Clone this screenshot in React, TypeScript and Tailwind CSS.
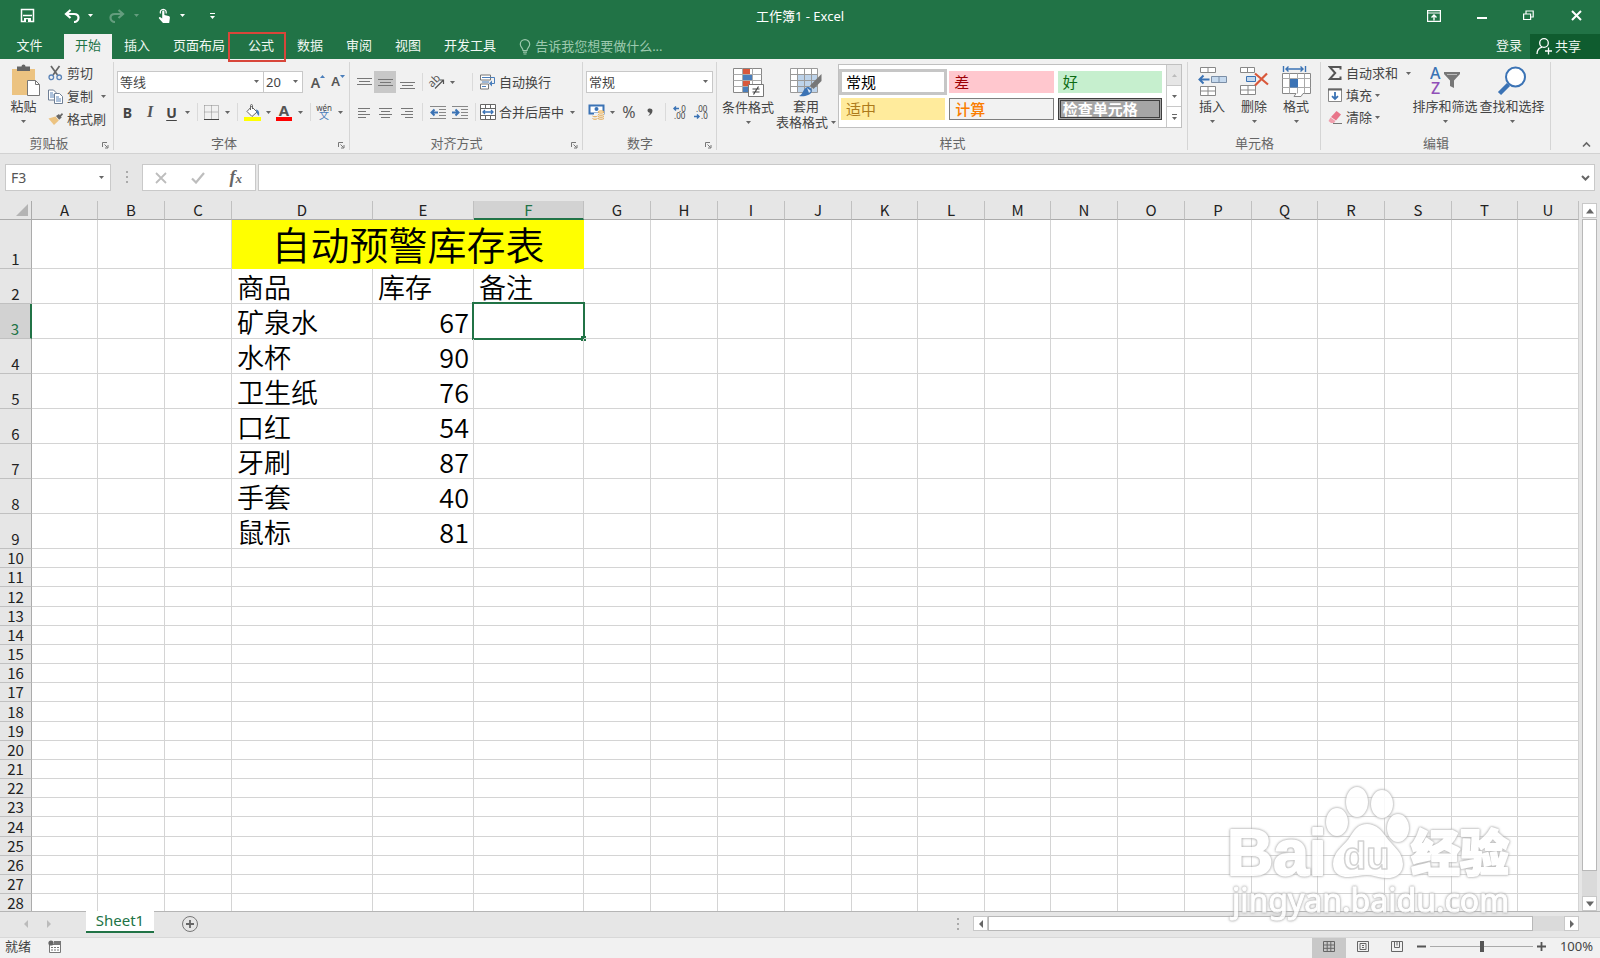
import React from "react";

type Kids = { children?: React.ReactNode };

const Caret = ({ className = "text-[#666]" }: { className?: string }) => (
  <svg width="5" height="3" viewBox="0 0 5 3" className={`shrink-0 ${className}`}>
    <path d="M0 0h5L2.5 3z" fill="currentColor" />
  </svg>
);

const Icon = ({ w = 16, h = 16, children }: Kids & { w?: number; h?: number }) => (
  <svg width={w} height={h} viewBox={`0 0 ${w} ${h}`} fill="none" className="shrink-0">
    {children}
  </svg>
);

const Tool = ({ label, className = "w-5", children }: Kids & { label: string; className?: string }) => (
  <button type="button" aria-label={label} className={`flex h-[22px] shrink-0 items-center justify-center ${className}`}>
    {children}
  </button>
);

const Rule = ({ className = "w-3" }: { className?: string }) => (
  <span className={`flex h-[18px] shrink-0 justify-center ${className}`}>
    <span className="w-px bg-[#dadada]" />
  </span>
);

const Launcher = () => (
  <svg width="7" height="7" viewBox="0 0 7 7" fill="none" stroke="#777">
    <path d="M.5 5V.5H5M2.5 2.5l3 3M6 3v3H3" />
  </svg>
);

function Group({ title, width, titlePad = "", launcher, children }: Kids & { title: string; width: string; titlePad?: string; launcher?: boolean }) {
  return (
    <section aria-label={title} className={`relative flex shrink-0 flex-col ${width}`}>
      <div className="h-[75px]">{children}</div>
      <h2 className={`relative h-[17px] text-center text-[13px] leading-[18px] text-[#666] ${titlePad}`}>
        {title}
        {launcher && (
          <button type="button" aria-label={`${title}设置`} className="absolute right-[5px] top-[8px]">
            <Launcher />
          </button>
        )}
      </h2>
      <span className="absolute right-0 top-[3px] bottom-[3px] w-px bg-[#d5d5d5]" />
    </section>
  );
}

function Combo({ label, value, options, className }: { label: string; value: string; options: string[]; className: string }) {
  return (
    <div className={`relative flex h-[22px] items-center border border-[#c8c8c8] bg-white ${className}`}>
      <select aria-label={label} defaultValue={value} className="h-5 w-full appearance-none bg-transparent pl-[2px] text-[13px] leading-5 text-[#444] outline-none">
        {options.map((o) => (
          <option key={o}>{o}</option>
        ))}
      </select>
      <span className="pointer-events-none absolute right-1 top-2">
        <Caret />
      </span>
    </div>
  );
}

const Row = ({ icon, text, caret, gap = "gap-1" }: { icon: React.ReactNode; text: string; caret?: string; gap?: string }) => (
  <button type="button" className={`flex items-center whitespace-nowrap text-[13px] leading-[22px] ${gap}`}>
    {icon}
    <span>{text}</span>
    {caret && (
      <span className={caret}>
        <Caret />
      </span>
    )}
  </button>
);

function Big({ icon, text, width }: { icon: React.ReactNode; text: string; width: string }) {
  return (
    <button type="button" className={`flex shrink-0 flex-col items-center whitespace-nowrap text-[13px] leading-[18px] ${width}`}>
      <span className="flex h-8 items-center justify-center">{icon}</span>
      {text}
      <span className="mt-[5px]">
        <Caret />
      </span>
    </button>
  );
}

function TitleBar() {
  return (
    <header className="relative flex h-[34px] items-center pb-[3px] text-white">
      <button type="button" aria-label="保存" className="ml-5">
        <Icon w={15} h={15}>
          <path d="M1.5 1.5h12v12h-12z" stroke="#fff" strokeWidth="1.5" />
          <path d="M3 7.5h9" stroke="#fff" strokeWidth="1.5" />
          <path d="M4 10h7v4H4z" fill="#fff" />
          <path d="M6 11.2h2V14H6z" fill="#217346" />
        </Icon>
      </button>
      <button type="button" aria-label="撤消" className="ml-[29px]">
        <Icon w={16} h={14}>
          <path d="M6.5 1L2 5l4.500 4M2.500 5H10c3 0 4.500 1.500 4.500 3.800S12.500 13 10 13" stroke="#fff" strokeWidth="2.200" />
        </Icon>
      </button>
      <span className="ml-2"><Caret className="text-white" /></span>
      <button type="button" aria-label="恢复" className="ml-4 opacity-30">
        <Icon w={16} h={14}>
          <path d="M9.500 1L14 5l-4.500 4M13.500 5H6C3 5 1.500 6.500 1.500 8.800S3.500 13 6 13" stroke="#fff" strokeWidth="2.200" />
        </Icon>
      </button>
      <span className="ml-[9px] opacity-30"><Caret className="text-white" /></span>
      <button type="button" aria-label="触摸/鼠标模式" className="ml-[19px]">
        <Icon w={13} h={16}>
          <path d="M2.500 5.500A3 3 0 1 1 8 5.500" stroke="#fff" strokeWidth="1.200" />
          <path d="M4.200 3.500c0-1.400 2.200-1.400 2.200 0V7l4.200.9c1 .2 1.400.9 1.300 1.800L11.200 15H5L1 10.500c-.6-.9.500-1.900 1.400-1.200l1.800 1.200z" fill="#fff" />
        </Icon>
      </button>
      <span className="ml-[9px]"><Caret className="text-white" /></span>
      <button type="button" aria-label="自定义快速访问工具栏" className="ml-[25px]">
        <Icon w={5} h={6}>
          <path d="M0 .5h5" stroke="#fff" />
          <path d="M0 3h5L2.500 6z" fill="#fff" />
        </Icon>
      </button>
      <h1 className="pointer-events-none absolute inset-x-0 text-center text-[13px] leading-8">工作簿1 - Excel</h1>
      <div className="ml-auto flex items-center pr-[18px]">
        <button type="button" aria-label="功能区显示选项" className="mr-[36px]">
          <Icon w={14} h={12}>
            <path d="M.6.6h12.800v10.800H.6zM1 3h12" stroke="#fff" strokeWidth="1.200" />
            <path d="M7 10.500V5.200M4.500 7.500L7 5l2.500 2.500" stroke="#fff" strokeWidth="1.400" />
          </Icon>
        </button>
        <button type="button" aria-label="最小化" className="mr-9">
          <Icon w={10} h={10}><path d="M0 7h10" stroke="#fff" strokeWidth="2" /></Icon>
        </button>
        <button type="button" aria-label="还原" className="mr-[37px]">
          <Icon w={11} h={11}>
            <path d="M.6 4h7v5.500h-7zM3 3.500V1h7.200v6H8" stroke="#fff" strokeWidth="1.200" />
          </Icon>
        </button>
        <button type="button" aria-label="关闭">
          <Icon w={11} h={11}><path d="M1 1l9 9M10 1l-9 9" stroke="#fff" strokeWidth="2" /></Icon>
        </button>
      </div>
    </header>
  );
}

const TABS = ["插入", "页面布局", "公式", "数据", "审阅", "视图", "开发工具"];

function TabRow() {
  return (
    <nav className="flex h-[25px] text-[13px] leading-[22px] text-[#f0f8f3]">
      <button type="button" className="w-16 pb-[3px] pr-[5px]">文件</button>
      <div className="flex gap-px">
        <button type="button" className="bg-[#f1f1f1] px-[11px] pb-[3px] text-[#217346]">开始</button>
        {TABS.map((t) => (
          <button key={t} type="button" className="relative whitespace-nowrap px-[11px] pb-[3px]">
            {t}
            {t === "公式" && <span className="absolute -left-[9px] -right-px -top-[2px] z-10 h-[30px] border-2 border-[#d8463a]" />}
          </button>
        ))}
      </div>
      <div className="ml-3 flex items-center text-[#9cc9ae]">
        <Icon w={12} h={16}>
          <path d="M4 11.500C4 9 1.300 8.200 1.300 5.300a4.700 4.700 0 0 1 9.400 0C10.700 8.200 8 9 8 11.500zM4 13.200h4M4.500 15h3" stroke="#9cc9ae" strokeWidth="1.200" />
        </Icon>
        <input aria-label="操作说明搜索" placeholder="告诉我您想要做什么..." className="ml-1 w-40 bg-transparent pb-[2px] text-[13px] leading-[22px] outline-none placeholder:text-[#9cc9ae]" />
      </div>
      <div className="ml-auto flex">
        <button type="button" className="px-2 pb-[3px]">登录</button>
        <button type="button" className="flex w-[70px] items-center gap-[3px] bg-[#0f5c2f] pb-[2px] pl-[6px]">
          <Icon w={16} h={18}>
            <circle cx="8" cy="6" r="4.300" stroke="#fff" strokeWidth="1.300" />
            <path d="M1 17c0-4 2-6 5.200-6.800M12.500 10.500v7M9 14h7" stroke="#fff" strokeWidth="1.300" />
          </Icon>
          共享
        </button>
      </div>
    </nav>
  );
}

const Lines = ({ rows, w = 15 }: { rows: [number, number, number][]; w?: number }) => (
  <Icon w={w} h={15}>
    {rows.map(([x1, x2, y]) => (
      <path key={y} d={`M${x1} ${y + 0.5}H${x2}`} stroke="#777" />
    ))}
  </Icon>
);

function Clipboard() {
  return (
    <Group title="剪贴板" width="w-[114px]" titlePad="pr-4" launcher>
      <div className="flex pl-[11px] pt-1">
        <button type="button" className="flex w-[30px] shrink-0 flex-col items-center text-[13px] leading-[18px]">
          <Icon w={30} h={34}>
            <path d="M1 6h23v26H1z" fill="#ecc381" />
            <path d="M6 3.500h4.500a2 2 0 0 1 4 0H19V8H6z" fill="#666" />
            <path d="M16.500 17.500h8l4 4v11h-12z" fill="#fff" stroke="#777" />
            <path d="M24.500 17.500v4h4" stroke="#777" />
          </Icon>
          <span className="-ml-[5px] whitespace-nowrap">粘贴</span>
          <span className="-ml-[5px] mt-[5px]"><Caret /></span>
        </button>
        <div className="-mt-px flex flex-col items-start gap-px pl-[7px]">
          <Row icon={
            <Icon w={15} h={16}>
              <path d="M3 1l6.500 9M11.500 1L5 10" stroke="#666" strokeWidth="1.700" />
              <circle cx="3.300" cy="12.300" r="2.300" stroke="#5b84b8" strokeWidth="1.300" />
              <circle cx="11.200" cy="12.300" r="2.300" stroke="#5b84b8" strokeWidth="1.300" />
            </Icon>
          } text="剪切" />
          <Row icon={
            <Icon w={15} h={15}>
              <path d="M.5 1h5l3 3v7h-8z" fill="#fff" stroke="#6f7f95" />
              <path d="M2 4h3M2 6h4M2 8h4" stroke="#5b84b8" />
              <path d="M6.500 4.500h5l3 3v7h-8z" fill="#fff" stroke="#6f7f95" />
              <path d="M8 8h3M8 10h5M8 12h5" stroke="#5b84b8" />
            </Icon>
          } text="复制" caret="ml-1" />
          <Row icon={
            <Icon w={15} h={14}>
              <path d="M8 4l3-2 .8 1.200L14 1l1 1.500-2 2 .7 1-2.600 2.300z" fill="#666" />
              <path d="M7.500 4.500l3.300 4L6 13 .5 6.500z" fill="#ecc381" />
            </Icon>
          } text="格式刷" />
        </div>
      </div>
    </Group>
  );
}

function FontGroup() {
  return (
    <Group title="字体" width="w-[236px]" titlePad="pr-4" launcher>
      <div className="flex flex-col gap-2 pl-[3px] pt-3">
        <div className="flex">
          <Combo label="字体" value="等线" options={["等线", "宋体", "黑体"]} className="w-[147px]" />
          <Combo label="字号" value="20" options={["11", "20", "28"]} className="-ml-px w-10" />
          <Tool label="增大字号" className="ml-1 w-[22px]">
            <span className="text-[14px] font-semibold text-[#555]">A</span>
            <span className="-mt-3"><Icon w={5} h={3}><path d="M0 3h5L2.500 0z" fill="#4a7ebb" /></Icon></span>
          </Tool>
          <Tool label="减小字号" className="w-[18px]">
            <span className="text-[13px] font-semibold text-[#555]">A</span>
            <span className="-mt-3"><Caret className="text-[#4a7ebb]" /></span>
          </Tool>
        </div>
        <div className="flex items-center">
          <Tool label="加粗" className="w-[21px]"><b className="text-[14px] text-[#444]">B</b></Tool>
          <Tool label="倾斜" className="w-6"><i className="font-['Liberation_Serif',serif] text-[16px] font-bold text-[#555]">I</i></Tool>
          <Tool label="下划线" className="w-[19px]"><b className="text-[14px] text-[#444] underline underline-offset-2">U</b></Tool>
          <Tool label="下划线样式" className="w-3"><Caret /></Tool>
          <Rule className="w-2" />
          <Tool label="边框">
            <Icon w={15} h={15}>
              <path d="M.5 .5h14v13M.5 .5v13M7.500 .5v13M.5 7h14" stroke="#888" strokeDasharray="1 1" />
              <path d="M0 14.500h15" stroke="#444" />
            </Icon>
          </Tool>
          <Tool label="边框样式" className="w-3"><Caret /></Tool>
          <Rule className="w-2" />
          <Tool label="填充颜色" className="w-[22px]">
            <Icon w={17} h={17}>
              <path d="M7.500 2.500L13 8l-5 4.500L3 7.500z" fill="#fff" stroke="#666" />
              <path d="M6.500 6V1.500c0-1.300 2-1.300 2 0V5" stroke="#666" />
              <path d="M12 5.500c3 .5 3.500 3 3 6.500-1.500-1-2.500-3-3-6.500z" fill="#4a7ebb" />
              <path d="M0 13h17v4H0z" fill="#ff0" />
            </Icon>
          </Tool>
          <Tool label="填充颜色列表" className="w-[10px]"><Caret /></Tool>
          <Tool label="字体颜色" className="w-[22px]">
            <span className="flex flex-col items-center">
              <b className="text-[15px] leading-[13px] text-[#555]">A</b>
              <span className="h-1 w-4 bg-[#f00]" />
            </span>
          </Tool>
          <Tool label="字体颜色列表" className="w-[10px]"><Caret /></Tool>
          <Rule className="w-[10px]" />
          <Tool label="拼音指南" className="w-[18px]">
            <span className="flex flex-col items-center text-[8px] leading-[7px] text-[#444]">
              wén<span className="text-[10px] leading-[9px] text-[#4a7ebb]">文</span>
            </span>
          </Tool>
          <Tool label="拼音选项" className="w-[14px]"><Caret /></Tool>
        </div>
      </div>
    </Group>
  );
}

function AlignGroup() {
  return (
    <Group title="对齐方式" width="w-[233px]" titlePad="pr-5" launcher>
      <div className="flex flex-col gap-2 pl-1 pt-3">
        <div className="flex items-center">
          <Tool label="顶端对齐" className="w-5"><Lines rows={[[0, 15, 3], [2, 13, 6], [0, 15, 9]]} /></Tool>
          <Tool label="垂直居中" className="w-[22px] bg-[#c8c8c8]"><Lines rows={[[0, 15, 4], [2, 13, 7], [0, 15, 10]]} /></Tool>
          <Tool label="底端对齐" className="w-[22px]"><Lines rows={[[0, 15, 7], [2, 13, 10], [0, 15, 13]]} /></Tool>
          <Rule className="w-[9px]" />
          <Tool label="方向" className="w-[19px]">
            <Icon w={17} h={16}>
              <text x="1" y="11" fontSize="11" fontFamily="Noto Sans" fill="#555" transform="rotate(-45 6 9)">ab</text>
              <path d="M7 14.500l8-8M11.500 6H15.500v4" stroke="#555" strokeWidth="1.200" />
            </Icon>
          </Tool>
          <Tool label="方向列表" className="w-3"><Caret /></Tool>
          <Rule className="ml-[6px] w-4" />
          <Row icon={
            <Icon w={16} h={16}>
              <path d="M.5 1h10v5h-10zM.5 10h8v5h-8z" fill="#fff" stroke="#777" />
              <path d="M2 3.500h12.500v6H10M2 8h7M2 12.500h4" stroke="#4a7ebb" />
              <path d="M12 6.500L9 9.500l3 3z" fill="#4a7ebb" />
            </Icon>
          } text="自动换行" gap="gap-[3px]" />
        </div>
        <div className="flex items-center">
          <Tool label="左对齐" className="w-5"><Lines rows={[[1, 13, 3], [1, 9, 6], [1, 13, 9], [1, 9, 12]]} /></Tool>
          <Tool label="居中" className="w-[22px]"><Lines rows={[[1, 14, 3], [3, 12, 6], [1, 14, 9], [3, 12, 12]]} /></Tool>
          <Tool label="右对齐" className="w-[22px]"><Lines rows={[[1, 13, 3], [5, 13, 6], [1, 13, 9], [5, 13, 12]]} /></Tool>
          <Rule className="w-[9px]" />
          <Tool label="减少缩进量" className="w-[22px]">
            <Icon w={16} h={15}>
              <path d="M0 1.500h16M9 4.500h7M9 7.500h7M9 10.500h7M0 13.500h16" stroke="#888" />
              <path d="M8 7.500H2M4.500 4.500l-3 3 3 3" stroke="#3b73b5" strokeWidth="2" />
            </Icon>
          </Tool>
          <Tool label="增加缩进量" className="w-[22px]">
            <Icon w={16} h={15}>
              <path d="M0 1.500h16M9 4.500h7M9 7.500h7M9 10.500h7M0 13.500h16" stroke="#888" />
              <path d="M0 7.500h6M3.500 4.500l3 3-3 3" stroke="#3b73b5" strokeWidth="2" />
            </Icon>
          </Tool>
          <Rule className="w-[9px]" />
          <Row icon={
            <Icon w={16} h={16}>
              <path d="M.5.5h15v15H.5zM.5 4.500h15M.5 11.500h15M5.500.5v4M10.500.5v4M5.500 11.500v4M10.500 11.500v4" fill="#fff" stroke="#666" />
              <path d="M3 8h10M5 6L3 8l2 2M11 6l2 2-2 2" stroke="#3b73b5" strokeWidth="1.300" />
            </Icon>
          } text="合并后居中" caret="ml-[3px]" gap="gap-[3px]" />
        </div>
      </div>
    </Group>
  );
}

function NumberGroup() {
  return (
    <Group title="数字" width="w-[134px]" titlePad="pr-5" launcher>
      <div className="flex flex-col gap-2 pl-[3px] pr-1 pt-3">
        <Combo label="数字格式" value="常规" options={["常规", "数值", "货币"]} className="w-full" />
        <div className="flex items-center">
          <Tool label="会计数字格式" className="w-[21px]">
            <Icon w={17} h={16}>
              <path d="M1.500 1.500h14v8h-14z" fill="#fff" stroke="#3b73b5" strokeWidth="2" />
              <circle cx="8.500" cy="5" r="2" fill="#3b73b5" />
              <path d="M6 9h10v7H6z" fill="#f1f1f1" />
              <ellipse cx="13" cy="8" rx="3" ry="1.200" fill="#fbe3b5" stroke="#e3a64a" strokeWidth=".8" />
              <path d="M10 10.500c1 1 5 1 6 0M10 12.500c1 1 5 1 6 0M4.500 12c1 1 4 1 5 0M4.500 14.500c1 1 4 1 5 0M10 14.500c1 1 5 1 6 0" stroke="#e3a64a" />
            </Icon>
          </Tool>
          <Tool label="会计数字格式列表" className="w-[10px]"><Caret /></Tool>
          <Tool label="百分比样式" className="w-6"><span className="text-[16px] text-[#555]">%</span></Tool>
          <Tool label="千位分隔样式" className="w-[18px]">
            <Icon w={6} h={8}><path d="M.5 2.200C.5-.3 5.500-.3 5.500 2.700 5.500 5.500 3.500 7 1 8c1.300-1.200 2-2.300 1.800-3.300C1.500 4.700.5 3.700.5 2.200z" fill="#555" /></Icon>
          </Tool>
          <Rule className="w-3" />
          <Tool label="增加小数位数" className="w-[18px]">
            <Icon w={14} h={15}>
              <path d="M6 3.500H1M3 1.500l-2 2 2 2" stroke="#3b73b5" strokeWidth="1.500" />
              <text x="6" y="7" fontSize="8" fontFamily="Noto Sans" fill="#444">.0</text>
              <text x="1" y="14" fontSize="8" fontFamily="Noto Sans" fill="#444">.00</text>
            </Icon>
          </Tool>
          <Tool label="减少小数位数" className="w-6">
            <Icon w={14} h={15}>
              <text x="2" y="7" fontSize="8" fontFamily="Noto Sans" fill="#444">.00</text>
              <path d="M0 11.500h5M3 9.500l2 2-2 2" stroke="#3b73b5" strokeWidth="1.500" />
              <text x="7" y="14" fontSize="8" fontFamily="Noto Sans" fill="#444">.0</text>
            </Icon>
          </Tool>
        </div>
      </div>
    </Group>
  );
}

const STYLES: [string, string][] = [
  ["常规", "bg-white text-black outline-3 outline-[#c6c6c6] -outline-offset-1"],
  ["差", "bg-[#ffc7ce] text-[#9c0006]"],
  ["好", "bg-[#c6efce] text-[#0d6b12]"],
  ["适中", "bg-[#ffeb9c] text-[#ad7a1a]"],
  ["计算", "border border-[#7f7f7f] bg-[#f2f2f2] text-[#fa7d00] font-medium"],
  ["检查单元格", "border-3 border-double border-[#3f3f3f] bg-[#a5a5a5] text-white font-bold"],
];

function StylesGroup() {
  return (
    <Group title="样式" width="w-[471px]">
      <div className="flex pt-[5px]">
        <div className="flex pl-1 pt-[2px]">
          <Big width="w-[54px]" text="条件格式" icon={
            <Icon w={31} h={30}>
              <path d="M.5 1.500h28v24H.5z" fill="#fff" stroke="#888" />
              <path d="M10 2h7v5h-7z" fill="#d9583b" /><path d="M10 7.500h9.500v5.500H10z" fill="#4a7ebb" />
              <path d="M10 13.500h7v5.500h-7z" fill="#d9583b" /><path d="M10 19.500h5v5.500h-5z" fill="#4a7ebb" />
              <path d="M9.500 1.500v24M19.500 1.500v24M.5 7.500h28M.5 13.500h28M.5 19.500h28" stroke="#aaa" />
              <path d="M15.500 17.500h15v12h-15z" fill="#fff" stroke="#777" />
              <path d="M19.500 22h7M19.500 25h7M25.500 19.500l-5 8" stroke="#444" strokeWidth="1.200" />
            </Icon>
          } />
          <button type="button" className="flex w-[62px] flex-col items-center whitespace-nowrap text-[13px] leading-4">
            <span className="flex h-8 items-center">
              <Icon w={32} h={30}>
                <path d="M.5 1.500h27v24H.5z" fill="#fff" />
                <path d="M7.500 7.500h20v18h-20z" fill="#bdd3ea" />
                <path d="M.5 1.500h27v24H.5zM7.500 1.500v24M14.500 1.500v24M21.500 1.500v24M.5 7.500h27M.5 13.500h27M.5 19.500h27" stroke="#9a9a9a" />
                <path d="M31.500 7v7l-8 8-3.500-3.500z" fill="#777" />
                <path d="M9 29c4-1 4-8 8.500-9 3 0 5 2.500 4 5-1 3-7 5-12.500 4z" fill="#3b73b5" />
                <path d="M17 21l4 3-2 2z" fill="#dbe7f4" />
              </Icon>
            </span>
            <span>套用</span>
            <span className="flex items-center gap-[3px]">表格格式<Caret /></span>
          </button>
        </div>
        <div className="ml-px flex h-16 w-[344px] border border-[#c0c0c0] bg-white">
          <div className="grid flex-1 grid-cols-3 content-start gap-x-1 gap-y-[5px] py-[6px] pl-[2px] pr-1">
            {STYLES.map(([name, look]) => (
              <button key={name} type="button" className={`flex h-[22px] items-center whitespace-nowrap text-[15px] leading-4 ${look}`}>
                <span className={name === "检查单元格" ? "pl-[2px]" : "pl-[5px]"}>{name}</span>
              </button>
            ))}
          </div>
          <div className="flex w-[15px] flex-col divide-y divide-[#c8c8c8] border-l border-[#c8c8c8]">
            <button type="button" aria-label="上一行" className="flex flex-1 items-center justify-center bg-[#e6e6e6]">
              <Icon w={5} h={3}><path d="M0 3h5L2.500 0z" fill="#bbb" /></Icon>
            </button>
            <button type="button" aria-label="下一行" className="flex flex-1 items-center justify-center"><Caret /></button>
            <button type="button" aria-label="其他" className="flex flex-1 items-center justify-center">
              <Icon w={5} h={6}><path d="M0 .5h5" stroke="#666" /><path d="M0 3h5L2.500 6z" fill="#666" /></Icon>
            </button>
          </div>
        </div>
      </div>
    </Group>
  );
}

function CellsGroup() {
  return (
    <Group title="单元格" width="w-[133px]">
      <div className="flex pl-[3px] pt-[6px]">
        <Big width="w-[42px]" text="插入" icon={
          <Icon w={30} h={31}>
            <path d="M3.500 1.500h15v5h-15zM11 1.500v5M3.500 20.500h15v9h-15zM11 20.500v9M3.500 25h15" fill="#fff" stroke="#888" />
            <path d="M14.500 10.500h15v6h-15zM22 10.500v6" fill="#c5d9ee" stroke="#7b8ea6" />
            <path d="M12.500 13.500H2.500M6.500 9.500l-4 4 4 4" stroke="#3b73b5" strokeWidth="2" />
          </Icon>
        } />
        <Big width="w-[42px]" text="删除" icon={
          <Icon w={30} h={31}>
            <path d="M1.500 1.500h14v5h-14zM8.500 1.500v5M1.500 19.500h15v9h-15zM9 19.500v9M1.500 24h15" fill="#fff" stroke="#888" />
            <path d="M7.500 10.500h9v5h-9z" fill="#c5d9ee" stroke="#3b73b5" />
            <path d="M16 7.500l13 11M28 7.500L16 19.500" stroke="#d9583b" strokeWidth="2.200" />
          </Icon>
        } />
        <Big width="w-[42px]" text="格式" icon={
          <Icon w={29} h={32}>
            <path d="M1.500 1v6M23.500 1v6M3.500 4h18M6.500 1.500L4 4l2.500 2.500M18.500 1.500L21 4l-2.500 2.500" stroke="#3b73b5" strokeWidth="1.400" />
            <path d="M.5 8.500h28v20H21l-2 3h-7l2-3H.5z" fill="#fff" stroke="#888" />
            <path d="M7.500 8.500v20M15.500 8.500v20M22.500 8.500v20M.5 13.500h28M.5 22.500h28" stroke="#aaa" />
            <path d="M8 14h8v8.500H8z" fill="#3b73b5" />
          </Icon>
        } />
      </div>
    </Group>
  );
}

function EditGroup() {
  return (
    <Group title="编辑" width="w-[230px]">
      <div className="flex pl-[7px] pt-[3px]">
        <div className="flex w-[84px] flex-col items-start">
          <Row icon={<Icon w={14} h={14}><path d="M12.500 3.500V1H1.800l5.400 6-5.400 6h10.700v-2.500" stroke="#555" strokeWidth="2" /></Icon>} text="自动求和" caret="ml-1" />
          <Row icon={
            <Icon w={14} h={14}>
              <path d="M.5 1h13v12.500H.5z" fill="#fff" stroke="#888" /><path d="M0 1.500h14" stroke="#666" strokeWidth="2" />
              <path d="M7 4v7M4 8.200L7 11l3-2.800" stroke="#3b73b5" strokeWidth="1.800" />
            </Icon>
          } text="填充" caret="-ml-px" />
          <Row icon={
            <Icon w={14} h={14}>
              <path d="M8.500 1l4.500 3.500-5 6L3 7z" fill="#e8758a" /><path d="M2.500 7.500l5 3.500-1.500 2H3L.5 11z" fill="#f0a0ae" />
              <path d="M5 13.500h9" stroke="#777" />
            </Icon>
          } text="清除" caret="-ml-px" />
        </div>
        <div className="flex gap-px pt-[3px]">
          <Big width="w-[66px]" text="排序和筛选" icon={
            <Icon w={30} h={30}>
              <text x="0" y="13" fontSize="16" fontWeight="500" fontFamily="Noto Sans" fill="#3b73b5">A</text>
              <text x="1" y="28" fontSize="16" fontWeight="500" fontFamily="Noto Sans" fill="#9050b8">Z</text>
              <path d="M14 6h16v2l-6 6.500V22l-4-2v-5.500L14 8z" fill="#777" />
              <path d="M17 8.500h10" stroke="#bbb" />
            </Icon>
          } />
          <Big width="w-[66px]" text="查找和选择" icon={
            <Icon w={30} h={30}>
              <circle cx="18.500" cy="11" r="9.500" fill="#fff" stroke="#3b73b5" strokeWidth="2" />
              <path d="M11.500 18.500L2.500 27.500" stroke="#3b73b5" strokeWidth="4.500" />
            </Icon>
          } />
        </div>
      </div>
    </Group>
  );
}

function FormulaBar() {
  return (
    <div className="flex h-[47px] shrink-0 items-start bg-[#e6e6e6] px-[5px] pt-[10px]">
      <div className="relative flex h-[27px] w-[106px] shrink-0 items-center border border-[#c9c9c9] bg-white">
        <input aria-label="名称框" defaultValue="F3" className="w-full bg-transparent pl-[5px] text-[14px] text-[#555] outline-none" />
        <span className="absolute right-[6px]"><Caret /></span>
      </div>
      <span className="flex h-[27px] w-[31px] shrink-0 items-center justify-center">
        <Icon w={2} h={13}><path d="M1 0v13" stroke="#aaa" strokeWidth="2" strokeDasharray="2 3" /></Icon>
      </span>
      <div className="flex h-[27px] w-[114px] shrink-0 items-center justify-between border border-[#c9c9c9] bg-white pl-3 pr-[13px]">
        <button type="button" aria-label="取消"><Icon w={12} h={12}><path d="M1 1l10 10M11 1L1 11" stroke="#bdbdbd" strokeWidth="1.800" /></Icon></button>
        <button type="button" aria-label="输入"><Icon w={14} h={12}><path d="M1 6.500L5 10.500 13 1" stroke="#bdbdbd" strokeWidth="2.200" /></Icon></button>
        <button type="button" aria-label="插入函数" className="font-['Liberation_Serif',serif] text-[18px] font-bold italic leading-5 text-[#666]">
          f<span className="text-[13px]">x</span>
        </button>
      </div>
      <div className="relative ml-[2px] flex h-[27px] flex-1 items-center border border-[#c9c9c9] bg-white">
        <input aria-label="编辑栏" className="w-full bg-transparent px-2 text-[14px] outline-none" />
        <span className="absolute right-1"><Icon w={9} h={6}><path d="M1 1l3.500 3.500L8 1" stroke="#666" strokeWidth="2" /></Icon></span>
      </div>
    </div>
  );
}

const COLUMNS: [string, string][] = [
  ["A", "w-[66px]"], ["B", "w-[67px]"], ["C", "w-[67px]"], ["D", "w-[141px]"], ["E", "w-[101px]"], ["F", "w-[110px]"],
  ["G", "w-[67px]"], ["H", "w-[67px]"], ["I", "w-[67px]"], ["J", "w-[67px]"], ["K", "w-[66px]"], ["L", "w-[67px]"],
  ["M", "w-[66px]"], ["N", "w-[67px]"], ["O", "w-[67px]"], ["P", "w-[67px]"], ["Q", "w-[66px]"], ["R", "w-[67px]"],
  ["S", "w-[67px]"], ["T", "w-[66px]"], ["U", ""],
];

const STOCK: Record<number, [string, number]> = {
  3: ["矿泉水", 67],
  4: ["水杯", 90],
  5: ["卫生纸", 76],
  6: ["口红", 54],
  7: ["牙刷", 87],
  8: ["手套", 40],
  9: ["鼠标", 81],
};

const rowHeight = (r: number) => (r === 1 ? "h-[49px]" : r <= 9 ? "h-[35px]" : r % 6 === 0 ? "h-5" : "h-[19px]");

function cellText(r: number, c: string): string | number | null {
  if (r === 2) return ({ D: "商品", E: "库存", F: "备注" } as Record<string, string>)[c] ?? null;
  const item = STOCK[r];
  if (!item) return null;
  return c === "D" ? item[0] : c === "E" ? item[1] : null;
}

function Sheet() {
  const line = "border-b border-r border-[#d4d4d4]";
  return (
    <table className="w-full table-fixed border-separate border-spacing-0 bg-white font-['Noto_Sans_CJK_SC',sans-serif]">
      <colgroup>
        <col className="w-8" />
        {COLUMNS.map(([c, w]) => <col key={c} className={w} />)}
      </colgroup>
      <thead>
        <tr className="h-[19px] text-[15px] leading-[18px]">
          <th aria-label="全选" className="border-b border-r border-[#ababab] bg-[#e6e6e6] p-0">
            <span className="flex justify-end pr-[3px]"><Icon w={12} h={12}><path d="M12 0v12H0z" fill="#b4b4b4" /></Icon></span>
          </th>
          {COLUMNS.map(([c]) => (
            <th key={c} scope="col" className={`border-r border-r-[#c0c0c0] p-0 font-normal ${c === "F" ? "border-b-2 border-b-[#217346] bg-[#d2d2d2] leading-[17px] text-[#217346]" : "border-b border-b-[#ababab] bg-[#e6e6e6] text-[#222]"}`}>
              {c}
            </th>
          ))}
        </tr>
      </thead>
      <tbody>
        {Array.from({ length: 28 }, (_, i) => i + 1).map((r) => (
          <tr key={r} className={rowHeight(r)}>
            <th scope="row" className={`border-b border-b-[#c0c0c0] p-0 align-bottom text-[15px] font-normal leading-[18px] ${r === 3 ? "border-r-2 border-r-[#217346] bg-[#d2d2d2] text-[#217346]" : "border-r border-r-[#ababab] bg-[#e6e6e6] text-[#222]"}`}>
              {r}
            </th>
            {COLUMNS.map(([c]) => {
              if (r === 1 && c === "D")
                return <td key={c} colSpan={3} className="bg-[#ff0] p-0 text-center align-top text-[39px] font-[350] leading-[46px] text-black">自动预警库存表</td>;
              if (r === 1 && (c === "E" || c === "F")) return null;
              const v = cellText(r, c);
              return (
                <td key={c} className={`relative p-0 align-top text-[27px] font-[350] leading-[36px] text-black ${line}`}>
                  {v !== null && <div className={`h-[34px] ${typeof v === "number" ? "pr-1 text-right" : "pl-[5px]"}`}>{v}</div>}
                  {r === 3 && c === "F" && (
                    <span className="absolute -bottom-[2px] -left-[2px] -right-[2px] -top-[2px] border-2 border-[#217346]">
                      <span className="absolute -bottom-[3px] -right-[3px] size-[5px] bg-[#217346]" />
                    </span>
                  )}
                </td>
              );
            })}
          </tr>
        ))}
      </tbody>
    </table>
  );
}

const Arrow = ({ d, className = "text-[#666]" }: { d: string; className?: string }) => (
  <svg width="8" height="8" viewBox="0 0 8 8" className={className}><path d={d} fill="currentColor" /></svg>
);
const UP = "M0 6.500h8L4 1.500z";
const DOWN = "M0 1.500h8L4 6.500z";
const LEFT = "M6 0v8L2 4z";
const RIGHT = "M2 0v8l4-4z";

const ScrollButton = ({ label, d }: { label: string; d: string }) => (
  <button type="button" aria-label={label} className="flex size-[15px] shrink-0 items-center justify-center border border-[#c8c8c8] bg-white">
    <Arrow d={d} />
  </button>
);

function SheetTabs() {
  return (
    <div className="flex h-[26px] shrink-0 items-start border-t border-[#b5b5b5] bg-[#e6e6e6]">
      <div className="flex w-[86px] gap-[15px] pl-[22px] pt-2">
        <button type="button" aria-label="上一张工作表"><Arrow d={LEFT} className="text-[#bbb]" /></button>
        <button type="button" aria-label="下一张工作表"><Arrow d={RIGHT} className="text-[#bbb]" /></button>
      </div>
      <button type="button" className="-mt-px h-[22px] w-[68px] border-b-2 border-[#217346] bg-white pb-[2px] text-[15px] leading-[18px] text-[#217346]">Sheet1</button>
      <button type="button" aria-label="新工作表" className="ml-[27px] mt-[3px]">
        <Icon w={18} h={18}>
          <circle cx="9" cy="9" r="7.500" stroke="#777" />
          <path d="M9 5v8M5 9h8" stroke="#666" strokeWidth="1.800" />
        </Icon>
      </button>
      <div className="ml-auto flex w-[643px] pt-1">
        <span className="mr-[14px] mt-[2px]"><Icon w={2} h={12}><path d="M1 0v12" stroke="#aaa" strokeWidth="2" strokeDasharray="2 3" /></Icon></span>
        <ScrollButton label="向左滚动" d={LEFT} />
        <div className="flex flex-1 bg-[#dadada]"><div className="h-[15px] w-[545px] border border-[#b8b8b8] bg-white" /></div>
        <ScrollButton label="向右滚动" d={RIGHT} />
        <span className="w-[21px]" />
      </div>
    </div>
  );
}

function StatusBar() {
  return (
    <footer className="flex h-[21px] shrink-0 items-center border-t border-[#d8d8d8] bg-[#f1f1f1] text-[13px] text-[#444]">
      <span className="pb-[3px] pl-[5px] leading-[17px]">就绪</span>
      <button type="button" aria-label="录制宏" className="ml-[17px] pb-[3px]">
        <Icon w={13} h={13}>
          <path d="M1.500 4.500h11v8h-11z" fill="#fff" stroke="#777" />
          <path d="M6 1h7v4H6z" fill="#777" /><circle cx="3" cy="3" r="2.600" fill="#666" />
          <path d="M3 7.500h8M3 10h8" stroke="#777" strokeDasharray="2 1" />
        </Icon>
      </button>
      <div className="ml-auto flex h-full items-center">
        <button type="button" aria-label="普通" className="flex h-full w-[34px] items-center justify-center bg-[#c8c8c8] pb-[3px]">
          <Icon w={12} h={11}><path d="M.5.5h11v10H.5zM4.200.5v10M7.800.5v10M.5 4h11M.5 7.300h11" stroke="#666" /></Icon>
        </button>
        <button type="button" aria-label="页面布局" className="flex h-full w-[34px] items-center justify-center pb-[3px]">
          <Icon w={12} h={11}><path d="M.5.5h11v10H.5zM3 2.500h6v6H3zM5 4.500h2M5 6.500h2" stroke="#666" /></Icon>
        </button>
        <button type="button" aria-label="分页预览" className="flex h-full w-[34px] items-center justify-center pb-[3px]">
          <Icon w={12} h={11}><path d="M.5.5h11v10H.5zM3.500.5v6h5v-6M6 .5v4" stroke="#666" /></Icon>
        </button>
        <div className="flex items-center pb-[3px] pl-[3px] leading-[17px]">
          <button type="button" aria-label="缩小"><Icon w={9} h={9}><path d="M0 4.500h9" stroke="#555" strokeWidth="2" /></Icon></button>
          <input type="range" aria-label="显示比例" defaultValue={50} className="mx-1 h-px w-[103px] appearance-none bg-[#aaa] [&::-webkit-slider-thumb]:h-[11px] [&::-webkit-slider-thumb]:w-1 [&::-webkit-slider-thumb]:appearance-none [&::-webkit-slider-thumb]:bg-[#555]" />
          <button type="button" aria-label="放大"><Icon w={9} h={9}><path d="M0 4.500h9M4.500 0v9" stroke="#555" strokeWidth="1.800" /></Icon></button>
          <span className="w-[54px] pr-[7px] text-right">100%</span>
        </div>
      </div>
    </footer>
  );
}

function Watermark() {
  return (
    <svg width="300" height="150" viewBox="0 0 300 150" className="pointer-events-none absolute bottom-7 right-20 z-20 opacity-85" strokeLinejoin="round">
      <g fill="#fff" stroke="#fff" className="[filter:drop-shadow(0_0_1px_#aaa)_drop-shadow(0_0_1px_#bbb)]">
        <g strokeWidth="2">
          <text x="7" y="95" fontSize="64" fontWeight="700" fontFamily="Liberation Sans, sans-serif">Bai</text>
          <text x="191" y="91" fontSize="49" fontWeight="900" fontFamily="Noto Sans CJK SC, sans-serif">经验</text>
          <ellipse cx="137" cy="22" rx="10" ry="14" />
          <ellipse cx="162" cy="24" rx="10" ry="13" />
          <ellipse cx="117" cy="42" rx="10" ry="13" />
          <ellipse cx="178" cy="48" rx="10" ry="13" />
          <path d="M147 45c-10 0-13 8-18 15-6 8-15 13-15 24 0 9 7 12 14 12 7 0 12-2 19-2s12 3 20 3c8 0 15-4 15-13 0-10-8-16-14-23-6-8-11-16-21-16z" />
        </g>
        <text x="12" y="132" fontSize="32" strokeWidth="1" fontFamily="Noto Sans, sans-serif">jingyan.baidu.com</text>
      </g>
      <text x="123" y="89" fontSize="38" fontWeight="700" fontFamily="Liberation Sans, sans-serif" fill="#fff" stroke="#ccc" strokeWidth="1.500">du</text>
    </svg>
  );
}

export default function App() {
  return (
    <div className="relative flex h-screen flex-col overflow-hidden bg-[#e6e6e6] font-['Noto_Sans','Noto_Sans_CJK_SC',sans-serif]">
      <div className="shrink-0 bg-[#217346]">
        <TitleBar />
        <TabRow />
      </div>
      <div className="flex h-[95px] shrink-0 border-b border-[#d2d2d2] bg-[#f1f1f1] text-[#444]">
        <Clipboard />
        <FontGroup />
        <AlignGroup />
        <NumberGroup />
        <StylesGroup />
        <CellsGroup />
        <EditGroup />
        <button type="button" aria-label="折叠功能区" className="mb-[5px] ml-auto mr-[9px] self-end">
          <Icon w={9} h={8}><path d="M1 6.500L4.500 3 8 6.500" stroke="#666" strokeWidth="1.600" /></Icon>
        </button>
      </div>
      <FormulaBar />
      <main className="flex min-h-0 flex-1">
        <div className="min-w-0 flex-1 overflow-hidden">
          <Sheet />
        </div>
        <div className="flex w-[21px] flex-col items-center pt-[2px]">
          <ScrollButton label="向上滚动" d={UP} />
          <div className="mt-px flex w-[15px] flex-1 flex-col bg-[#dadada]">
            <div className="h-24 max-h-[652px] grow border border-[#b8b8b8] bg-white" />
          </div>
          <ScrollButton label="向下滚动" d={DOWN} />
        </div>
      </main>
      <SheetTabs />
      <StatusBar />
      <Watermark />
    </div>
  );
}
